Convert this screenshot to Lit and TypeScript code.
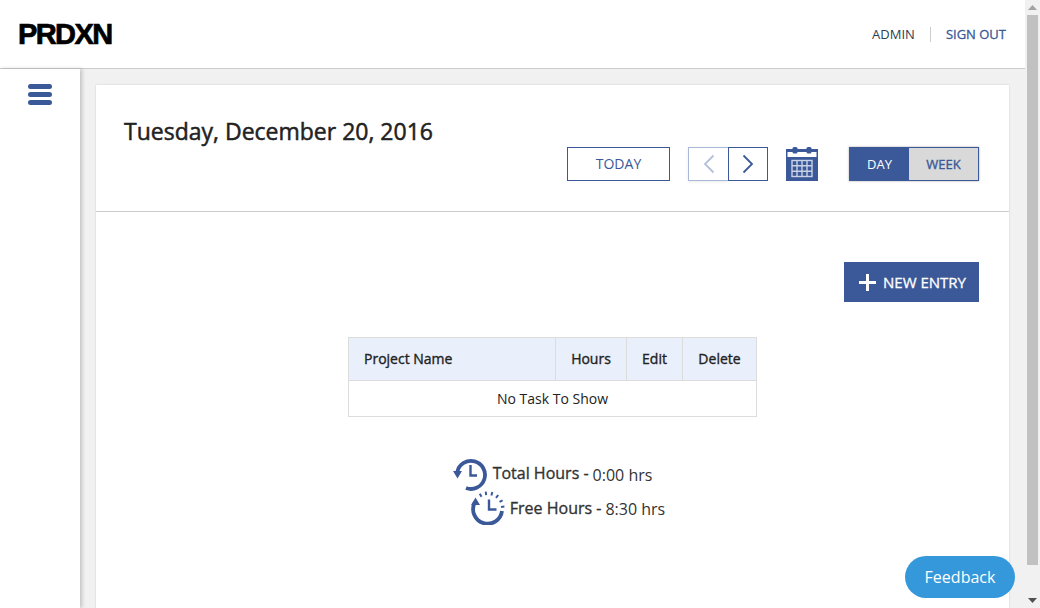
import { LitElement, html, css } from "lit";
import { customElement } from "lit/decorators.js";

@customElement("app-root")
export class AppRoot extends LitElement {
  static styles = css`
    :host { display: flex; width: 1040px; height: 608px; overflow: hidden; position: relative; font-family: "Open Sans", sans-serif; color: #222; background: #f1f1f1; }
    * { box-sizing: border-box; }
    .page { flex: 0 0 1025px; display: flex; flex-direction: column; height: 608px; }
    header { flex: 0 0 69px; background: #fff; border-bottom: 1px solid #ccc; display: flex; align-items: center; justify-content: space-between; padding: 0 19px 0 18px; }
    .logo { font-family: "Liberation Sans", sans-serif; font-weight: 700; font-size: 29px; letter-spacing: -1.6px; color: #000; -webkit-text-stroke: 0.7px #000; line-height: 1; }
    .user { display: flex; align-items: center; font-size: 13px; font-weight: 400; }
    .admin { color: #2d3e50; padding-right: 15px; border-right: 1px solid #ccc; line-height: 15px; }
    .signout { color: #3b5998; -webkit-text-stroke: 0.3px #3b5998; padding-left: 15px; }
    .body { flex: 1; display: flex; min-height: 0; }
    aside { flex: 0 0 80px; background: #fff; box-shadow: 2px 0 4px rgba(0,0,0,.2); display: flex; justify-content: center; padding-top: 15px; position: relative; }
    .burger { width: 24px; height: 21px; display: flex; flex-direction: column; justify-content: space-between; }
    .burger i { display: block; height: 5px; border-radius: 2.5px; background: #3b5998; }
    main { flex: 1; padding: 16px 16px 0; min-width: 0; }
    .card { background: #fff; height: 100%; box-shadow: 0 0 2px rgba(0,0,0,.15); }
    .top { height: 127px; border-bottom: 1px solid #ccc; display: flex; padding: 31px 30px 0 28px; margin: 0; }
    h1 { margin: 0; font-size: 23px; line-height: 30px; font-weight: 400; -webkit-text-stroke: 0.5px #222; color: #222; flex: 1; }
    .controls { display: flex; padding-top: 31px; height: 65px; }
    .today { width: 103px; height: 34px; border: 1px solid #3b5998; color: #3b5998; font-size: 14px; display: flex; align-items: center; justify-content: center; padding-bottom: 2px; }
    .pager { margin-left: 18px; display: flex; height: 34px; }
    .pg { width: 40px; height: 34px; border: 1px solid #3b5998; display: flex; align-items: center; justify-content: center; }
    .pg.off { border-color: #a9b8d6; border-right: 0; width: 40px; box-shadow: 0 1px 3px rgba(0,0,0,.08); }
    .cal { margin-left: 18px; width: 32px; height: 34px; display: block; }
    .toggle { margin-left: 31px; width: 130px; height: 34px; display: flex; border: 1px solid #3b5998; box-shadow: 0 0 2px rgba(0,0,0,.35); font-size: 13px; }
    .toggle span { display: flex; align-items: center; justify-content: center; }
    .day { flex: 0 0 59px; background: #3b5998; color: #fff; }
    .week { flex: 1; background: #d9d9d9; color: #3b5998; -webkit-text-stroke: 0.35px #3b5998; }
    .content { padding: 50px 30px 0; display: flex; flex-direction: column; align-items: center; }
    .new { align-self: flex-end; width: 135px; height: 40px; background: #3b5998; color: #fff; font-size: 15px; -webkit-text-stroke: 0.3px #fff; display: flex; align-items: center; padding-left: 14px; gap: 6px; }
    table { margin-top: 35px; width: 409px; border-collapse: collapse; font-size: 14px; table-layout: fixed; }
    th, td { border: 1px solid #dcdcdc; padding: 0; }
    th { height: 43px; padding-bottom: 1px; background: #e9effb; font-weight: 400; -webkit-text-stroke: 0.35px #222; color: #222; text-align: center; }
    th:first-child { text-align: left; padding-left: 15px; width: 207px; }
    th:nth-child(2) { width: 71px; }
    th:nth-child(3) { width: 56px; }
    td { height: 36px; padding-bottom: 1px; text-align: center; color: #222; }
    .sum { margin-top: 40px; display: flex; flex-direction: column; align-items: center; gap: 0; }
    .row { display: flex; align-items: center; height: 34px; font-size: 16px; color: #333; }
    .row b { font-size: 16px; font-weight: 400; -webkit-text-stroke: 0.35px #333; margin: 0 4px 0 6px; position: relative; }
    .row.total b { top: -1px; }
    .row span { position: relative; top: 1px; }
    .row.free { margin-left: 31px; }
    .row.free b { margin-left: 5px; }
    .row svg { display: block; }
    .scroll { flex: 0 0 15px; height: 608px; background: #f1f1f1; display: flex; flex-direction: column; align-items: center; }
    .arrow { flex: 0 0 15px; display: flex; align-items: center; justify-content: center; }
    .thumb { width: 11px; flex: 1; background: #c1c1c1; margin: 0 0 28px; }
    .feedback { position: absolute; left: 905px; top: 556px; width: 110px; height: 42px; border-radius: 21px; background: #3498db; color: #fff; font-size: 16px; display: flex; align-items: center; justify-content: center; }
  `;

  render() {
    return html`
      <div class="page">
        <header>
          <div class="logo">PRDXN</div>
          <div class="user"><span class="admin">ADMIN</span><span class="signout">SIGN OUT</span></div>
        </header>
        <div class="body">
          <aside><div class="burger"><i></i><i></i><i></i></div></aside>
          <main>
            <div class="card">
              <div class="top">
                <h1>Tuesday, December 20, 2016</h1>
                <div class="controls">
                  <div class="today">TODAY</div>
                  <div class="pager">
                    <div class="pg off"><svg width="12" height="20" viewBox="0 0 12 20"><path d="M10.500 1.500 2 10l8.500 8.500" fill="none" stroke="#b3c0dc" stroke-width="1.800"/></svg></div>
                    <div class="pg"><svg width="12" height="20" viewBox="0 0 12 20"><path d="M1.500 1.500 10 10l-8.500 8.500" fill="none" stroke="#3b5998" stroke-width="1.800"/></svg></div>
                  </div>
                  <svg class="cal" viewBox="0 0 32 34">
                    <rect x="0" y="2" width="32" height="32" fill="#3b5998"/>
                    <rect x="1.500" y="5" width="29" height="5" fill="#fff"/>
                    <rect x="6.500" y="0" width="5" height="6.500" rx="1.500" fill="#3b5998"/>
                    <rect x="20.500" y="0" width="5" height="6.500" rx="1.500" fill="#3b5998"/>
                    <g fill="none" stroke="#c9d2e6" stroke-width="1.400">
                      <rect x="6" y="13.500" width="20" height="16"/>
                      <path d="M6 18.800h20M6 24.200h20M11 13.500v16M16 13.500v16M21 13.500v16"/>
                    </g>
                  </svg>
                  <div class="toggle"><span class="day">DAY</span><span class="week">WEEK</span></div>
                </div>
              </div>
              <div class="content">
                <div class="new">
                  <svg width="19" height="19" viewBox="0 0 19 19"><path d="M9.500 1v17M1 9.500h17" stroke="#fff" stroke-width="3" fill="none"/></svg>
                  <span>NEW ENTRY</span>
                </div>
                <table>
                  <thead><tr><th>Project Name</th><th>Hours</th><th>Edit</th><th>Delete</th></tr></thead>
                  <tbody><tr><td colspan="4">No Task To Show</td></tr></tbody>
                </table>
                <div class="sum">
                  <div class="row total">
                    <svg width="34" height="34" viewBox="0 0 34 34">
                      <path d="M4.300 15A14 14 0 1 1 13 31" fill="none" stroke="#3b5998" stroke-width="3.800"/>
                      <path d="M0 14h9L4.500 21.500z" fill="#3b5998"/>
                      <path d="M17.500 8v10.500H24" fill="none" stroke="#3b5998" stroke-width="2.400"/>
                    </svg>
                    <b>Total Hours -</b><span>0:00 hrs</span>
                  </div>
                  <div class="row free">
                    <svg width="34" height="34" viewBox="0 0 34 34">
                      <path d="M3.500 12A14.500 14.500 0 1 0 31 20" fill="none" stroke="#3b5998" stroke-width="3.800"/>
                      <path d="M0 14h9L4.500 6.500z" fill="#3b5998"/>
                      <path d="M10.500 5.700 8.750 2.700M15.200 4.100 14.700.7M20.400 4.400 21.300 1M25 6.800 27.200 4M28.500 10.900 31.600 9.300M30 15.900 33.400 15.600" stroke="#3b5998" stroke-width="2" fill="none"/>
                      <path d="M18 8.500V18.500H25.500" fill="none" stroke="#3b5998" stroke-width="2.400"/>
                    </svg>
                    <b>Free Hours -</b><span>8:30 hrs</span>
                  </div>
                </div>
              </div>
            </div>
          </main>
        </div>
      </div>
      <div class="scroll">
        <div class="arrow"><svg width="9" height="5" viewBox="0 0 9 5"><path d="M4.500 0 9 5H0z" fill="#a3a3a3"/></svg></div>
        <div class="thumb"></div>
        <div class="arrow"><svg width="9" height="5" viewBox="0 0 9 5"><path d="M0 0h9L4.500 5z" fill="#505050"/></svg></div>
      </div>
      <div class="feedback">Feedback</div>
    `;
  }
}
